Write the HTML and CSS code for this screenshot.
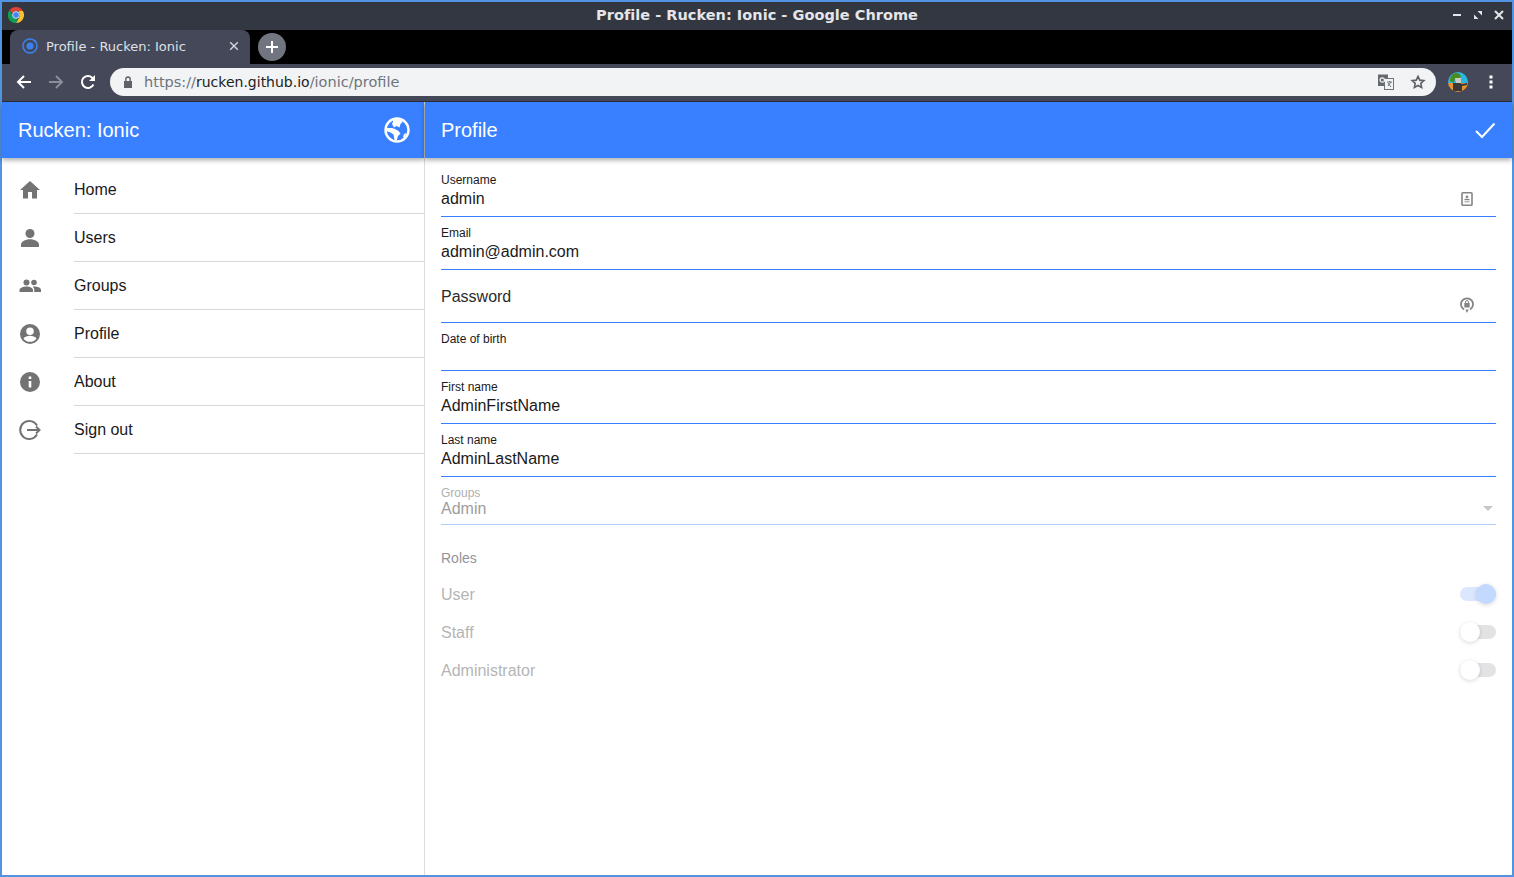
FILE: index.html
```html
<!DOCTYPE html>
<html>
<head>
    <title>Profile - Rucken: Ionic</title>
    <meta name="viewport" content="width=device-width, initial-scale=1.0">
    <link rel="stylesheet" href="styles.css">
</head>
<body>
<div class="window">
    <div class="titlebar">
        <svg class="chrome-logo" width="16" height="16" viewBox="0 0 16 16">
            <path fill="#db4437" d="M8 0a8 8 0 0 1 6.930 4H8a4 4 0 0 0-3.760 2.600L1.600 2.900A8 8 0 0 1 8 0z"/>
            <path fill="#fbc02d" d="M14.930 4A8 8 0 0 1 8 16l3.460-6A4 4 0 0 0 11 5.400L10.500 4z"/>
            <path fill="#0f9d58" d="M1.600 2.900l3.400 6.200A4 4 0 0 0 9.600 11.700L8 16A8 8 0 0 1 1.600 2.900z"/>
            <circle cx="8" cy="8" r="3.400" fill="#4285f4" stroke="#e8eaed" stroke-width="0.900"/>
        </svg>
        <div class="window-title">Profile - Rucken: Ionic - Google Chrome</div>
        <div class="window-buttons">
            <svg width="10" height="10" viewBox="0 0 10 10"><rect x="1" y="4" width="8" height="2" fill="#e4e6ea"/></svg>
            <svg width="10" height="10" viewBox="0 0 10 10"><path fill="#e4e6ea" d="M4.500 1H9v4.500zM1 4.500L5.500 9H1z"/></svg>
            <svg width="10" height="10" viewBox="0 0 10 10"><path stroke="#e4e6ea" stroke-width="2" d="M1 1l8 8M9 1l-8 8"/></svg>
        </div>
    </div>

    <div class="tabstrip">
        <div class="tab">
            <svg width="16" height="16" viewBox="0 0 16 16">
                <circle cx="8" cy="8" r="7" fill="none" stroke="#3b82f0" stroke-width="1.600"/>
                <circle cx="8" cy="8" r="3.500" fill="#3b82f0"/>
                <circle cx="13" cy="3" r="1.300" fill="#3b82f0"/>
            </svg>
            <span class="tab-title">Profile - Rucken: Ionic</span>
            <svg class="tab-close" width="10" height="10" viewBox="0 0 10 10"><path stroke="#d5d7dc" stroke-width="1.400" d="M1.200 1.200l7.600 7.600M8.800 1.200l-7.600 7.600"/></svg>
        </div>
        <div class="new-tab">
            <svg width="12" height="12" viewBox="0 0 12 12"><path stroke="#fff" stroke-width="2" d="M6 0v12M0 6h12"/></svg>
        </div>
    </div>

    <div class="toolbar">
        <svg class="nav-icon" width="16" height="16" viewBox="0 0 16 16"><path fill="none" stroke="#fff" stroke-width="2" d="M15 8H2M8 2L2 8l6 6"/></svg>
        <svg class="nav-icon" width="16" height="16" viewBox="0 0 16 16"><path fill="none" stroke="#8b8d98" stroke-width="2" d="M1 8h13M8 2l6 6-6 6"/></svg>
        <svg class="nav-icon" width="16" height="16" viewBox="0 0 16 16"><path fill="none" stroke="#fff" stroke-width="2" d="M13.400 10.500A6 6 0 1 1 12.200 3.700L14 5.600"/><path fill="#fff" d="M15 1v6H9z"/></svg>
        <div class="omnibox">
            <svg width="10" height="12" viewBox="0 0 10 12"><path fill="#5f6368" d="M1 5h8v7H1z"/><path fill="none" stroke="#5f6368" stroke-width="1.400" d="M2.800 5V3.200a2.200 2.200 0 0 1 4.400 0V5"/></svg>
            <div class="url"><span class="url-dim">https://</span><span class="url-host">rucken.github.io</span><span class="url-dim">/ionic/profile</span></div>
            <svg class="omni-translate" width="16" height="16" viewBox="0 0 16 16">
                <rect x="0" y="0.500" width="10" height="11.500" fill="#666a70"/>
                <rect x="6.500" y="4.500" width="9" height="11" fill="#f1f3f4" stroke="#70747a"/>
                <circle cx="4.300" cy="6" r="2.200" fill="none" stroke="#f1f3f4" stroke-width="1.200"/>
                <path stroke="#70747a" d="M9 8h5M11.500 7v1M13 8l-3 4M10 9l3 4"/>
            </svg>
            <svg class="omni-star" width="16" height="16" viewBox="0 0 24 24"><path fill="none" stroke="#5f6368" stroke-width="2.400" d="M12 3.500l2.600 5.700 6.200.7-4.600 4.200 1.300 6.100L12 17.200l-5.500 3 1.300-6.100-4.600-4.200 6.200-.7z"/></svg>
        </div>
        <svg class="avatar" width="20" height="20" viewBox="0 0 20 20">
            <clipPath id="avatar-clip"><circle cx="10" cy="10" r="10"/></clipPath>
            <g clip-path="url(#avatar-clip)">
                <rect width="20" height="11" fill="#2bb8e0"/>
                <rect y="11" width="20" height="9" fill="#e8932e"/>
                <path fill="#4b8a1e" d="M2 9c0-5 3-8 6-8s5 2 5 4l-2 1H7L6 11z"/>
                <path fill="#c9cbc4" d="M7 6h6v5H8z"/>
                <path fill="#3a3a3a" d="M5 11h7l2 1 5-1v2l-5 1v5H5z"/>
            </g>
        </svg>
        <svg class="menu-dots" width="4" height="14" viewBox="0 0 4 14"><g fill="#fff"><rect x="0.500" y="0.500" width="3" height="3"/><rect x="0.500" y="5.500" width="3" height="3"/><rect x="0.500" y="10.500" width="3" height="3"/></g></svg>
    </div>

    <div class="app">
        <aside class="sidebar">
            <header class="app-header">
                <div class="app-title">Rucken: Ionic</div>
                <svg width="26" height="26" viewBox="0 0 26 26">
                    <circle cx="13" cy="13" r="11.500" fill="#3880ff" stroke="#fff" stroke-width="2.400"/>
                    <path fill="#fff" d="M9 2h8l1.500 3-2 2-1 3.500-3-1.500-2.500 1.500L8 7l1-2z"/>
                    <path fill="#fff" d="M2 11h6l3 1 3.500 2 2 2.500-2.500 2.500-1.500 5-2-1-1-5.500-3-2L2 14z"/>
                    <path fill="#fff" d="M20 17l2.500-1-2 5-1.500-1z"/>
                </svg>
            </header>
            <nav class="menu">
                <div class="menu-item">
                    <svg class="menu-icon" viewBox="0 0 24 24"><path d="M10 20.500v-6.500h4v6.500h5V12h3L12 3 2 12h3v8.500z"/></svg>
                    <div class="menu-label">Home</div>
                </div>
                <div class="menu-item">
                    <svg class="menu-icon" viewBox="0 0 24 24"><circle cx="12" cy="7.500" r="4.500"/><path d="M3 21v-2.500c0-3.500 6-5.200 9-5.200s9 1.700 9 5.200V21z"/></svg>
                    <div class="menu-label">Users</div>
                </div>
                <div class="menu-item">
                    <svg class="menu-icon" viewBox="0 0 24 24"><circle cx="8.500" cy="8.500" r="3"/><circle cx="16" cy="8.500" r="2.800"/><path d="M1.500 18v-2c0-2.300 4-3.500 7-3.500s6.500 1.200 6.500 3.500v2zM16.200 18v-2.500c0-1-.5-2-1.500-2.800 3-.5 8.300.5 8.300 3.300v2z"/></svg>
                    <div class="menu-label">Groups</div>
                </div>
                <div class="menu-item">
                    <svg class="menu-icon" viewBox="0 0 24 24"><path fill-rule="evenodd" d="M12 2a10 10 0 1 0 0 20 10 10 0 0 0 0-20zm0 3.500a3.800 3.800 0 1 1 0 7.600 3.800 3.800 0 0 1 0-7.600zM5.500 16.500c1-2 4-2.800 6.500-2.800s5.500.8 6.500 2.800a8 8 0 0 1-13 0z"/></svg>
                    <div class="menu-label">Profile</div>
                </div>
                <div class="menu-item">
                    <svg class="menu-icon" viewBox="0 0 24 24"><path fill-rule="evenodd" d="M12 2a10 10 0 1 0 0 20 10 10 0 0 0 0-20zm-1.300 4.500h2.600v2.600h-2.600zm0 4.500h2.600v6.500h-2.600z"/></svg>
                    <div class="menu-label">About</div>
                </div>
                <div class="menu-item">
                    <svg class="menu-icon menu-icon-line" viewBox="0 0 24 24"><path d="M19 7.500A9 9 0 1 0 19 16.500M9 12h12.500M18 8.500l3.500 3.500-3.500 3.500"/></svg>
                    <div class="menu-label">Sign out</div>
                </div>
            </nav>
        </aside>

        <main class="content">
            <header class="app-header">
                <div class="app-title">Profile</div>
                <svg width="22" height="22" viewBox="0 0 22 22"><path fill="none" stroke="#fff" stroke-width="2" d="M2 12l6 6L20.500 4.500"/></svg>
            </header>
            <form class="form">
                <div class="field field-tall">
                    <div class="field-label">Username</div>
                    <div class="field-value">admin</div>
                    <svg class="field-icon" width="12" height="14" viewBox="0 0 12 14">
                        <rect x="1" y="0.800" width="10" height="12.400" rx="0.800" fill="#fff" stroke="#858585" stroke-width="1.600"/>
                        <circle cx="6" cy="4.800" r="1.400" fill="#858585"/>
                        <path fill="#858585" d="M3.500 6.800h5v1.400h-5z"/>
                        <path fill="#b5b5b5" d="M3.500 9h5v1.400h-5z"/>
                    </svg>
                </div>
                <div class="field field-tall">
                    <div class="field-label">Email</div>
                    <div class="field-value">admin@admin.com</div>
                </div>
                <div class="field field-tall field-empty">
                    <div class="field-value field-placeholder">Password</div>
                    <svg class="field-icon field-icon-low" width="14" height="16" viewBox="0 0 14 16">
                        <path fill="none" stroke="#858585" stroke-width="1.800" d="M4 12.500A6 6 0 1 1 10 12.500"/>
                        <path fill="#858585" d="M4.300 6h5.400v4.500H4.300zM5.300 12.500h3.400L7 16z"/>
                        <path fill="none" stroke="#858585" d="M5.500 6V5a1.500 1.500 0 0 1 3 0v1"/>
                    </svg>
                </div>
                <div class="field field-short">
                    <div class="field-label">Date of birth</div>
                </div>
                <div class="field field-tall">
                    <div class="field-label">First name</div>
                    <div class="field-value">AdminFirstName</div>
                </div>
                <div class="field field-tall">
                    <div class="field-label">Last name</div>
                    <div class="field-value">AdminLastName</div>
                </div>
                <div class="field field-short field-disabled">
                    <div class="field-label">Groups</div>
                    <div class="field-value">Admin</div>
                    <div class="select-arrow"></div>
                </div>
                <div class="roles-title">Roles</div>
                <div class="role-row">
                    <div class="role-label">User</div>
                    <div class="toggle toggle-on"><div class="toggle-knob"></div></div>
                </div>
                <div class="role-row">
                    <div class="role-label">Staff</div>
                    <div class="toggle"><div class="toggle-knob"></div></div>
                </div>
                <div class="role-row">
                    <div class="role-label">Administrator</div>
                    <div class="toggle"><div class="toggle-knob"></div></div>
                </div>
            </form>
        </main>
    </div>
</div>
</body>
</html>
```
FILE: styles.css
```css
* {
    box-sizing: border-box;
}
html, body {
    margin: 0;
    height: 100%;
    overflow: hidden;
}
body {
    background-color: #ffffff;
    font-family: "Liberation Sans", Arial, sans-serif;
}
.window {
    display: flex;
    flex-direction: column;
    height: 877px;
    border: 2px solid #5294e2;
}

/* browser chrome */
.titlebar {
    display: grid;
    grid-template-columns: 1fr auto 1fr;
    align-items: center;
    height: 28px;
    flex: none;
    background-color: #333741;
    padding: 0 8px 2px 6px;
}
.window-title {
    color: #e4e6ea;
    font-family: "DejaVu Sans", sans-serif;
    font-weight: bold;
    font-size: 14.5px;
    letter-spacing: 0.03px;
    padding-left: 2px;
}
.window-buttons {
    display: flex;
    justify-content: flex-end;
    gap: 11px;
    align-items: center;
}
.tabstrip {
    display: flex;
    align-items: flex-end;
    height: 34px;
    flex: none;
    background-color: #000000;
    padding-left: 8px;
}
.tab {
    display: flex;
    align-items: center;
    width: 240px;
    height: 34px;
    background-color: #444859;
    border-radius: 8px 8px 0 0;
    padding: 0 11px 2px 12px;
    color: #dfe1e6;
    font-family: "DejaVu Sans", sans-serif;
    font-size: 13px;
}
.tab-title {
    flex: 1;
    margin-left: 8px;
}
.new-tab {
    display: flex;
    align-items: center;
    justify-content: center;
    width: 28px;
    height: 28px;
    border-radius: 50%;
    background-color: #71757f;
    margin: 0 0 3px 8px;
}
.toolbar {
    display: flex;
    align-items: center;
    height: 38px;
    flex: none;
    background-color: #444859;
    border-bottom: 1px solid #2b2e38;
    padding: 0 0 1px 14px;
}
.nav-icon {
    margin-right: 16px;
}
.omnibox {
    display: flex;
    align-items: center;
    width: 1326px;
    height: 28px;
    margin-left: -2px;
    border-radius: 14px;
    background-color: #f1f3f4;
    padding: 0 10px 0 13px;
}
.url {
    flex: 1;
    margin-left: 11px;
    color: #70747a;
    font-family: "DejaVu Sans", sans-serif;
    font-size: 14.5px;
}
.url-host {
    color: #202124;
    font-size: 14px;
}
.omni-star {
    margin-left: 16px;
}
.avatar {
    margin-left: 12px;
}
.menu-dots {
    margin-left: 21px;
}

/* app */
.app {
    display: flex;
    flex: 1;
    min-height: 0;
}
.sidebar {
    width: 423px;
    flex: none;
    border-right: 1px solid #dcdcdc;
}
.content {
    flex: 1;
    min-width: 0;
}
.app-header {
    display: flex;
    align-items: center;
    justify-content: space-between;
    height: 56px;
    background-color: #3880ff;
    box-shadow: 0 2px 5px rgba(0, 0, 0, 0.35);
    padding: 0 14px 0 16px;
    position: relative;
}
.content .app-header {
    padding-right: 16px;
}
.app-title {
    color: #ffffff;
    font-size: 20px;
}
.menu {
    padding-top: 8px;
}
.menu-item {
    display: flex;
    align-items: stretch;
    height: 48px;
    padding-left: 16px;
}
.menu-icon {
    width: 24px;
    height: 24px;
    margin: 12px 32px 0 0;
    fill: #737373;
    flex: none;
}
.menu-icon-line {
    fill: none;
    stroke: #737373;
    stroke-width: 2;
}
.menu-label {
    flex: 1;
    font-size: 16px;
    color: #1a1a1a;
    line-height: 47px;
    border-bottom: 1px solid #d9d9d9;
}

/* form */
.form {
    padding: 6px 16px 0 16px;
}
.field {
    position: relative;
    border-bottom: 1px solid #3880ff;
}
.field-tall {
    height: 53px;
    padding-top: 9px;
}
.field-short {
    height: 48px;
    padding-top: 9px;
}
.field-label {
    font-size: 12px;
    line-height: 14px;
    color: #1a1a1a;
}
.field-value {
    font-size: 16px;
    line-height: 20px;
    color: #1a1a1a;
    margin-top: 2px;
}
.field-empty {
    padding-top: 17px;
}
.field-placeholder {
    color: #2b2b2b;
    margin-top: 0;
}
.field-icon {
    position: absolute;
    right: 23px;
    top: 28px;
}
.field-icon-low {
    right: 22px;
    top: 27px;
}
.field-disabled {
    border-bottom-color: #afccff;
}
.field-disabled .field-label {
    color: #b0b0b0;
}
.field-disabled .field-value {
    color: #9d9d9d;
    margin-top: -1px;
}
.select-arrow {
    position: absolute;
    right: 3px;
    top: 29px;
    border-left: 5px solid transparent;
    border-right: 5px solid transparent;
    border-top: 5px solid #c8c8c8;
}
.roles-title {
    font-size: 14px;
    line-height: 16px;
    color: #92949c;
    margin-top: 25px;
    margin-bottom: 9px;
}
.role-row {
    display: flex;
    align-items: center;
    justify-content: space-between;
    height: 38px;
}
.role-label {
    font-size: 16px;
    color: #b5b5b5;
    margin-top: 2px;
}
.toggle {
    position: relative;
    width: 36px;
    height: 14px;
    border-radius: 7px;
    background-color: #e3e3e5;
}
.toggle-knob {
    position: absolute;
    left: 0;
    top: -3px;
    width: 20px;
    height: 20px;
    border-radius: 50%;
    background-color: #ffffff;
    box-shadow: 0 1px 4px rgba(0, 0, 0, 0.16);
}
.toggle-on {
    background-color: #dbe7ff;
}
.toggle-on .toggle-knob {
    left: 16px;
    background-color: #c3d9ff;
}
```
